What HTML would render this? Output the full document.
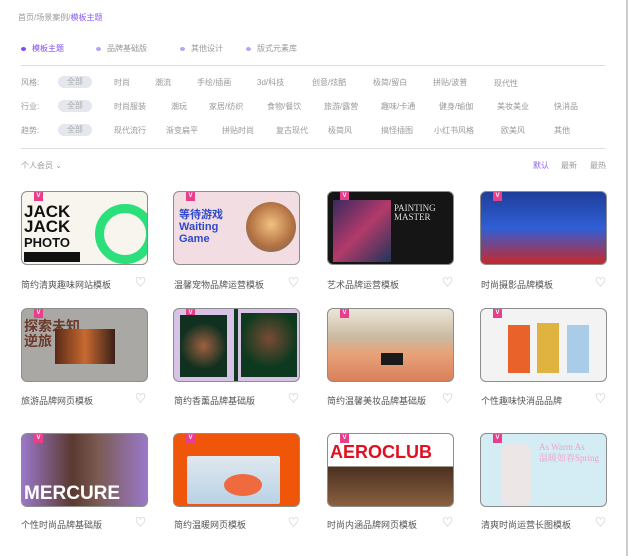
<!DOCTYPE html>
<html><head><meta charset="utf-8"><style>
*{margin:0;padding:0;box-sizing:border-box}
body{width:630px;height:556px;background:#fff;font-family:"Liberation Sans","Noto Sans CJK SC",sans-serif;position:relative;overflow:hidden;color:#888}
.a{position:absolute;white-space:nowrap}
.t{font-size:8px;color:#999}
.crumb{left:18px;top:12px;font-size:8px;color:#999}
.crumb b{font-weight:normal;color:#8b5cf6}
.tab{top:43px;font-size:8px;color:#999}
.tab:before{content:"";display:inline-block;width:5px;height:4px;border-radius:50%;background:#b9a3f5;margin-right:6px;vertical-align:middle}
.tab.on{color:#7c4ff0}.tab.on:before{background:#7c4ff0}
.hr{left:21px;width:584px;height:1px;background:#ddd}
.pill{width:34px;height:12px;border-radius:6px;background:#e4e7ee;font-size:8px;color:#aaa;text-align:center;line-height:12px}
.card{position:absolute;width:127px;height:74px;border:1.5px solid #8d8d8d;border-radius:6px;overflow:hidden}
.v{position:absolute;left:12px;top:0;width:9px;height:9px;background:#e83e8c;color:#fff;font-size:6px;text-align:center;line-height:9px;font-weight:bold}
.ti{font-size:9px;color:#555}
.hz{font-size:11px;color:#bbb}
</style></head><body>
<div class="a crumb">首页/场景案例/<b>模板主题</b></div>
<div class="a tab on" style="left:21px">模板主题</div>
<div class="a tab" style="left:96px">品牌基础版</div>
<div class="a tab" style="left:180px">其他设计</div>
<div class="a tab" style="left:246px">版式元素库</div>
<div class="a hr" style="top:65px"></div>
<div class="a t" style="left:21px;top:77px">风格:</div>
<div class="a pill" style="left:58px;top:76px">全部</div>
<div class="a t" style="left:114px;top:77px">时尚</div>
<div class="a t" style="left:155px;top:77px">潮流</div>
<div class="a t" style="left:197px;top:77px">手绘/插画</div>
<div class="a t" style="left:257px;top:77px">3d/科技</div>
<div class="a t" style="left:312px;top:77px">创意/炫酷</div>
<div class="a t" style="left:373px;top:77px">极简/留白</div>
<div class="a t" style="left:433px;top:77px">拼贴/波普</div>
<div class="a t" style="left:494px;top:78px">现代性</div>
<div class="a t" style="left:21px;top:101px">行业:</div>
<div class="a pill" style="left:58px;top:100px">全部</div>
<div class="a t" style="left:114px;top:101px">时尚服装</div>
<div class="a t" style="left:171px;top:101px">潮玩</div>
<div class="a t" style="left:209px;top:101px">家居/纺织</div>
<div class="a t" style="left:267px;top:101px">食物/餐饮</div>
<div class="a t" style="left:324px;top:101px">旅游/露营</div>
<div class="a t" style="left:381px;top:101px">趣味/卡通</div>
<div class="a t" style="left:439px;top:101px">健身/瑜伽</div>
<div class="a t" style="left:497px;top:101px">美妆美业</div>
<div class="a t" style="left:554px;top:101px">快消品</div>
<div class="a t" style="left:21px;top:125px">趋势:</div>
<div class="a pill" style="left:58px;top:124px">全部</div>
<div class="a t" style="left:114px;top:125px">现代流行</div>
<div class="a t" style="left:166px;top:125px">渐变扁平</div>
<div class="a t" style="left:222px;top:125px">拼贴时尚</div>
<div class="a t" style="left:276px;top:125px">复古现代</div>
<div class="a t" style="left:328px;top:125px">极简风</div>
<div class="a t" style="left:381px;top:125px">搞怪插图</div>
<div class="a t" style="left:434px;top:125px">小红书风格</div>
<div class="a t" style="left:501px;top:125px">欧美风</div>
<div class="a t" style="left:554px;top:125px">其他</div>
<div class="a hr" style="top:148px"></div>
<div class="a t" style="left:21px;top:160px">个人会员 ⌄</div>
<div class="a t" style="left:533px;top:160px;color:#8b5cf6">默认</div>
<div class="a t" style="left:561px;top:160px">最新</div>
<div class="a t" style="left:590px;top:160px">最热</div>
<div class="a" style="left:626px;top:0;width:2px;height:556px;background:#ccc"></div>

<!-- row1 -->
<div class="card" style="left:21px;top:191px;background:#f7f5ee"><div class="v">V</div>
<div class="a" style="left:2px;top:12px;font:900 17px/15px 'Liberation Sans';color:#111">JACK<br>JACK<br><span style="font-size:13px">PHOTO</span></div>
<div class="a" style="left:2px;top:60px;width:56px;height:10px;background:#111"></div>
<div class="a" style="left:73px;top:12px;width:60px;height:60px;border:9px solid #2be07a;border-radius:50%"></div></div>
<div class="card" style="left:173px;top:191px;background:#f2dde2"><div class="v">V</div>
<div class="a" style="left:5px;top:17px;font:bold 11px/12px 'Liberation Sans','Noto Sans CJK SC',sans-serif;color:#2f49c9">等待游戏<br>Waiting<br>Game</div>
<div class="a" style="left:72px;top:10px;width:50px;height:50px;border-radius:50%;background:radial-gradient(circle at 50% 45%,#f3c083,#b07040 60%,#5a6a80)"></div></div>
<div class="card" style="left:327px;top:191px;background:#151515"><div class="v">V</div>
<div class="a" style="left:5px;top:8px;width:58px;height:62px;background:linear-gradient(135deg,#3a2a60,#b33a6a,#20355a)"></div>
<div class="a" style="left:66px;top:12px;font:9px/9px 'Liberation Serif';color:#ddd">PAINTING<br>MASTER</div></div>
<div class="card" style="left:480px;top:191px;background:linear-gradient(180deg,#1f3e9a,#2f5fd6 50%,#c8282a)"><div class="v">V</div></div>
<div class="a ti" style="left:21px;top:278px">简约清爽趣味网站模板</div><div class="a hz" style="left:135px;top:274px">♡</div>
<div class="a ti" style="left:174px;top:278px">温馨宠物品牌运营模板</div><div class="a hz" style="left:288px;top:274px">♡</div>
<div class="a ti" style="left:327px;top:278px">艺术品牌运营模板</div><div class="a hz" style="left:442px;top:274px">♡</div>
<div class="a ti" style="left:481px;top:278px">时尚摄影品牌模板</div><div class="a hz" style="left:595px;top:274px">♡</div>

<!-- row2 -->
<div class="card" style="left:21px;top:308px;background:#a9a8a4"><div class="v">V</div>
<div class="a" style="left:2px;top:10px;font:bold 14px/15px 'Noto Sans CJK SC',sans-serif;color:#6b3a2a">探索未知<br>逆旅</div>
<div class="a" style="left:33px;top:20px;width:60px;height:35px;background:linear-gradient(90deg,#5a2a18,#c86a30,#3a2018)"></div></div>
<div class="card" style="left:173px;top:308px;background:#d8c3e6"><div class="v">V</div>
<div class="a" style="left:6px;top:6px;width:47px;height:62px;background:radial-gradient(circle at 50% 50%,#a06040,#103020 60%)"></div>
<div class="a" style="left:60px;top:0;width:4px;height:74px;background:#0d3a1e"></div>
<div class="a" style="left:67px;top:4px;width:56px;height:64px;background:radial-gradient(circle at 50% 40%,#7a4a35,#0d3a1e 60%)"></div></div>
<div class="card" style="left:327px;top:308px;background:linear-gradient(180deg,#ece6d8,#c9b9a0 40%,#e8a47c 60%,#d9805a)"><div class="v">V</div>
<div class="a" style="left:53px;top:44px;width:22px;height:12px;background:#1a1a1a"></div></div>
<div class="card" style="left:480px;top:308px;background:#f3f3f3"><div class="v">V</div>
<div class="a" style="left:27px;top:16px;width:22px;height:48px;background:#e8622a"></div>
<div class="a" style="left:56px;top:14px;width:22px;height:50px;background:#e0b240"></div>
<div class="a" style="left:86px;top:16px;width:22px;height:48px;background:#a9cde8"></div></div>
<div class="a ti" style="left:21px;top:394px">旅游品牌网页模板</div><div class="a hz" style="left:135px;top:390px">♡</div>
<div class="a ti" style="left:174px;top:394px">简约香薰品牌基础版</div><div class="a hz" style="left:288px;top:390px">♡</div>
<div class="a ti" style="left:327px;top:394px">简约温馨美妆品牌基础版</div><div class="a hz" style="left:442px;top:390px">♡</div>
<div class="a ti" style="left:481px;top:394px">个性趣味快消品品牌</div><div class="a hz" style="left:595px;top:390px">♡</div>

<!-- row3 -->
<div class="card" style="left:21px;top:433px;background:linear-gradient(90deg,#9a78c8,#5a3a30 40%,#7a5a50 60%,#9a78c8)"><div class="v">V</div>
<div class="a" style="left:2px;top:50px;font:900 19px/20px 'Liberation Sans';color:#fff">MERCURE</div></div>
<div class="card" style="left:173px;top:433px;background:#f0560a"><div class="v">V</div>
<div class="a" style="left:13px;top:22px;width:93px;height:48px;background:linear-gradient(180deg,#dfe8ee,#b9d2e6);border-radius:2px"></div>
<div class="a" style="left:50px;top:40px;width:38px;height:22px;border-radius:50%;background:#f06a40"></div></div>
<div class="card" style="left:327px;top:433px;background:linear-gradient(180deg,#fff 0,#fff 45%,#4a3020 45%,#8a6040)"><div class="v">V</div>
<div class="a" style="left:2px;top:9px;font:900 18px/18px 'Liberation Sans';color:#e01020">AEROCLUB</div></div>
<div class="card" style="left:480px;top:433px;background:#d4ecf3"><div class="v">V</div>
<div class="a" style="left:58px;top:8px;font:9px/11px 'Liberation Serif','Noto Serif CJK SC',serif;color:#f3a0d0">As Warm As<br>温暖如春Spring</div>
<div class="a" style="left:20px;top:10px;width:30px;height:62px;background:#ece6e6;border-radius:8px"></div></div>
<div class="a ti" style="left:21px;top:518px">个性时尚品牌基础版</div><div class="a hz" style="left:135px;top:514px">♡</div>
<div class="a ti" style="left:174px;top:518px">简约温暖网页模板</div><div class="a hz" style="left:288px;top:514px">♡</div>
<div class="a ti" style="left:327px;top:518px">时尚内涵品牌网页模板</div><div class="a hz" style="left:442px;top:514px">♡</div>
<div class="a ti" style="left:481px;top:518px">清爽时尚运营长图模板</div><div class="a hz" style="left:595px;top:514px">♡</div>
</body></html>
